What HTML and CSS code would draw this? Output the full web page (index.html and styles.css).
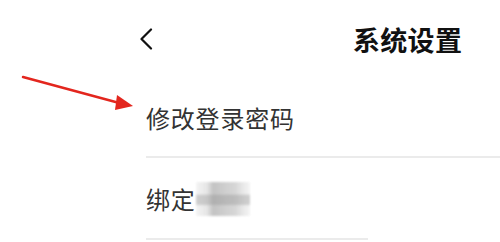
FILE: index.html
```html
<!DOCTYPE html>
<html lang="zh-CN">
<head>
    <meta charset="UTF-8">
    <meta name="viewport" content="width=device-width, initial-scale=1.0">
    <title>系统设置</title>
    <link rel="stylesheet" href="styles.css">
</head>
<body>
    <header class="topbar">
        <a href="#" class="back">
            <svg width="14" height="22" viewBox="0 0 14 22">
                <path d="M12 1.5 L2.5 11 L12 20.5" fill="none" stroke="#111" stroke-width="2.2" stroke-linecap="round" stroke-linejoin="round"/>
            </svg>
        </a>
        <h1 class="title">系统设置</h1>
    </header>
    <main class="settings">
        <div class="row">修改登录密码</div>
        <div class="row row-short">绑定<span class="masked"></span></div>
    </main>
    <svg class="arrow" width="120" height="40" viewBox="0 0 120 40">
        <path d="M2 2 L102 29" stroke="#e3261e" stroke-width="2.5" stroke-linecap="round"/>
        <path d="M96 20 L112 31 L94 35 Z" fill="#e3261e"/>
    </svg>
</body>
</html>
```

FILE: styles.css
```css
body {
    margin: 0;
    background-color: #fff;
    font-family: "Noto Sans CJK SC", "Noto Sans", sans-serif;
    color: #333;
    width: 500px;
    height: 242px;
    overflow: hidden;
    position: relative;
}
.topbar {
    display: flex;
    align-items: center;
    height: 78px;
    padding-left: 139px;
}
.back {
    display: flex;
    width: 14px;
}
.title {
    margin: 0 0 0 200px;
    font-size: 27px;
    font-weight: bold;
    color: #111;
    letter-spacing: 0.3px;
}
.settings {
    padding-left: 146px;
}
.row {
    display: flex;
    align-items: center;
    height: 78px;
    font-size: 24px;
    letter-spacing: 0.8px;
    border-bottom: 2px solid #ebebeb;
}
.row-short {
    width: 222px;
    height: 80px;
}
.masked {
    display: inline-block;
    width: 54px;
    height: 34px;
    margin-top: 2px;
    background:
        linear-gradient(180deg, transparent 0, transparent 35%, rgba(120, 120, 120, 0.35) 40%, rgba(120, 120, 120, 0.35) 65%, transparent 70%),
        linear-gradient(90deg, #f3f3f3 0, #e2e2e2 20%, #b9b9b9 32%, #c8c8c8 55%, #cfcfcf 72%, #e6e6e6 88%, #f3f3f3 100%);
    filter: blur(1px);
    opacity: 0.85;
}
.arrow {
    position: absolute;
    left: 21px;
    top: 75px;
}
```
